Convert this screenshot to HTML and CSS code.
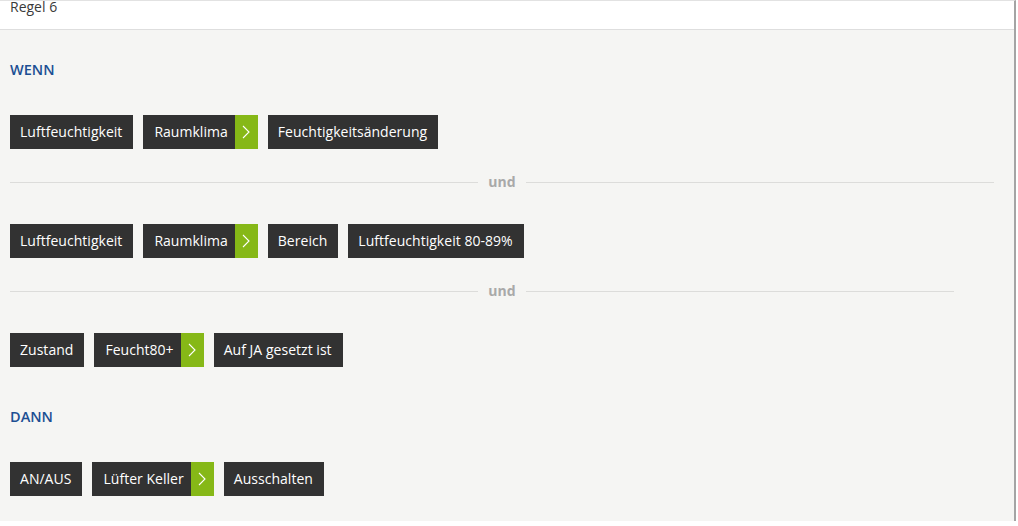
FILE: index.html
```html
<!DOCTYPE html>
<html lang="de">
<head>
<meta charset="utf-8">
<title>Regel 6</title>
<link rel="stylesheet" href="styles.css">
</head>
<body>
<div class="page">
  <div class="header"><span class="title">Regel 6</span></div>
  <div class="content">
    <div class="section-title">WENN</div>
    <div class="row">
      <span class="chip">Luftfeuchtigkeit</span>
      <span class="chip chip-device"><span class="chip-label">Raumklima</span><span class="chip-arrow"><svg width="8" height="14" viewBox="0 0 8 14"><polyline points="1,1 7,7 1,13" fill="none" stroke="#fff" stroke-width="1.1"/></svg></span></span>
      <span class="chip">Feuchtigkeitsänderung</span>
    </div>
    <div class="divider"><span class="line"></span><span class="divider-label">und</span><span class="line"></span></div>
    <div class="row">
      <span class="chip">Luftfeuchtigkeit</span>
      <span class="chip chip-device"><span class="chip-label">Raumklima</span><span class="chip-arrow"><svg width="8" height="14" viewBox="0 0 8 14"><polyline points="1,1 7,7 1,13" fill="none" stroke="#fff" stroke-width="1.1"/></svg></span></span>
      <span class="chip">Bereich</span>
      <span class="chip">Luftfeuchtigkeit 80-89%</span>
    </div>
    <div class="divider divider-short"><span class="line"></span><span class="divider-label">und</span><span class="line"></span></div>
    <div class="row">
      <span class="chip">Zustand</span>
      <span class="chip chip-device"><span class="chip-label">Feucht80+</span><span class="chip-arrow"><svg width="8" height="14" viewBox="0 0 8 14"><polyline points="1,1 7,7 1,13" fill="none" stroke="#fff" stroke-width="1.1"/></svg></span></span>
      <span class="chip">Auf JA gesetzt ist</span>
    </div>
    <div class="section-title section-then">DANN</div>
    <div class="row">
      <span class="chip">AN/AUS</span>
      <span class="chip chip-device"><span class="chip-label">Lüfter Keller</span><span class="chip-arrow"><svg width="8" height="14" viewBox="0 0 8 14"><polyline points="1,1 7,7 1,13" fill="none" stroke="#fff" stroke-width="1.1"/></svg></span></span>
      <span class="chip">Ausschalten</span>
    </div>
  </div>
</div>
</body>
</html>
```
FILE: styles.css
```css
html, body {
  margin: 0;
  padding: 0;
  background: #ffffff;
}

body {
  font-family: "Open Sans", "Liberation Sans", sans-serif;
  font-size: 14px;
  color: #333333;
}

.page {
  width: 1016px;
  height: 521px;
  border-right: 2px solid #a4a4a4;
  border-top: 1px solid #e2e2e2;
  box-sizing: border-box;
  display: flex;
  flex-direction: column;
  background: #ffffff;
}

.header {
  height: 29px;
  box-sizing: border-box;
  border-bottom: 1px solid #dedede;
  padding: 0 10px;
  background: #ffffff;
  overflow: hidden;
}

.title {
  display: block;
  line-height: 11px;
  color: #3a3a3a;
}

.content {
  flex: 1;
  background: #f5f5f3;
  padding: 30px 10px 0 10px;
  display: flex;
  flex-direction: column;
}

.section-title {
  font-weight: 600;
  color: #1c4f93;
  line-height: 20px;
  font-size: 14.5px;
  margin-bottom: 35px;
}

.section-then {
  margin-top: 40px;
}

.row {
  display: flex;
  gap: 10px;
  height: 34px;
}

.chip {
  display: flex;
  align-items: center;
  background: #323232;
  color: #ffffff;
  line-height: 34px;
  padding: 0 11px 0 10px;
  white-space: nowrap;
  letter-spacing: 0.03px;
}

.chip-device {
  padding: 0;
}

.chip-label {
  padding: 0 7px 0 11px;
}

.chip-arrow {
  width: 23px;
  height: 34px;
  background: #86b817;
  display: flex;
  align-items: center;
  justify-content: center;
}

.chip-arrow svg {
  display: block;
}

.divider {
  display: grid;
  grid-template-columns: 1fr auto 1fr;
  align-items: center;
  width: 984px;
  height: 20px;
  margin: 23px 0 32px 0;
}

.line {
  height: 1px;
  background: #dcdcda;
}

.divider-label {
  padding: 0 10px;
  font-weight: 700;
  color: #a9a9a9;
  line-height: 20px;
}

.divider-short .line:last-child {
  margin-right: 40px;
}
```
